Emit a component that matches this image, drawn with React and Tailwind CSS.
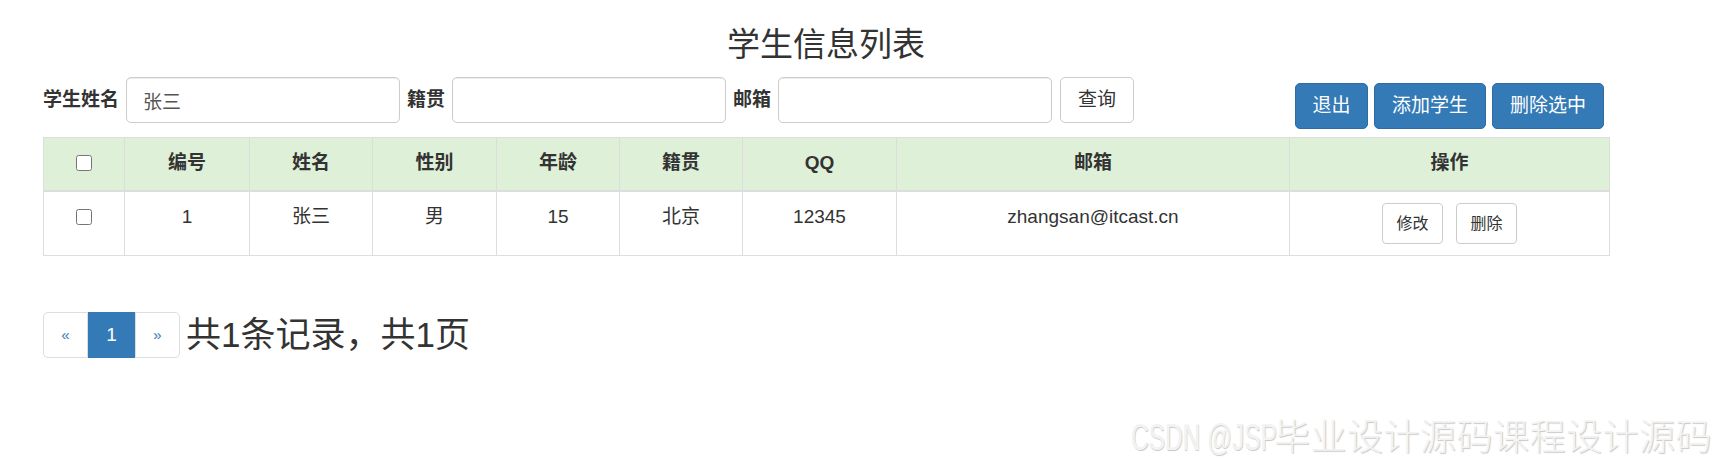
const font = { fontFamily: '"Liberation Sans", Arial, "Noto Sans CJK SC", sans-serif' };

const columns = [
  { key: "check", label: "", w: "w-[81px]" },
  { key: "id", label: "编号", w: "w-[125px]" },
  { key: "name", label: "姓名", w: "w-[123px]" },
  { key: "gender", label: "性别", w: "w-[124px]" },
  { key: "age", label: "年龄", w: "w-[123px]" },
  { key: "address", label: "籍贯", w: "w-[123px]" },
  { key: "qq", label: "QQ", w: "w-[154px]" },
  { key: "email", label: "邮箱", w: "w-[393px]" },
  { key: "ops", label: "操作", w: "w-[320px]" },
];

const students = [
  {
    id: 1,
    name: "张三",
    gender: "男",
    age: 15,
    address: "北京",
    qq: "12345",
    email: "zhangsan@itcast.cn",
  },
];

const Checkbox = () => (
  <input
    type="checkbox"
    className="w-[16px] h-[16px] mt-[6px] accent-[#337ab7]"
  />
);

const App = () => {
  return (
    <div
      className="relative w-[1719px] h-[469px] bg-white text-[#333] text-[19px] overflow-hidden"
      style={font}
    >
      <div className="pl-[43px] w-[1609px]">
        <h3 className="mt-[27px] mb-[14px] text-center text-[33px] leading-[36px] font-normal">
          学生信息列表
        </h3>

        <div className="flex justify-between items-start">
          <form className="flex items-center">
            <label className="font-bold mr-[7px]">学生姓名</label>
            <input
              defaultValue="张三"
              className="w-[274px] h-[46px] px-[16px] border border-[#ccc] rounded-[5px] text-[#555] shadow-[inset_0_1px_1px_rgba(0,0,0,0.075)] outline-none"
            />
            <label className="font-bold ml-[7px] mr-[7px]">籍贯</label>
            <input className="w-[274px] h-[46px] px-[16px] border border-[#ccc] rounded-[5px] text-[#555] shadow-[inset_0_1px_1px_rgba(0,0,0,0.075)] outline-none" />
            <label className="font-bold ml-[7px] mr-[7px]">邮箱</label>
            <input className="w-[274px] h-[46px] px-[16px] border border-[#ccc] rounded-[5px] text-[#555] shadow-[inset_0_1px_1px_rgba(0,0,0,0.075)] outline-none" />
            <button
              type="button"
              className="ml-[8px] w-[74px] h-[46px] border border-[#ccc] rounded-[5px] bg-white text-[#333]"
            >
              查询
            </button>
          </form>

          <div className="flex gap-[6px] mt-[6px] mr-[5px]">
            <button className="w-[73px] h-[46px] rounded-[5px] bg-[#337ab7] border border-[#2e6da4] text-white">
              退出
            </button>
            <button className="w-[112px] h-[46px] rounded-[5px] bg-[#337ab7] border border-[#2e6da4] text-white">
              添加学生
            </button>
            <button className="w-[112px] h-[46px] rounded-[5px] bg-[#337ab7] border border-[#2e6da4] text-white">
              删除选中
            </button>
          </div>
        </div>

        <table className="mt-[8px] w-[1566px] table-fixed border-collapse border border-[#ddd]">
          <thead>
            <tr className="bg-[#dff0d8]">
              {columns.map((col) => (
                <th
                  key={col.key}
                  className={`${col.w} border border-[#ddd] border-b-2 p-[11px] leading-[28px] font-bold text-center align-top`}
                >
                  {col.key === "check" ? <Checkbox /> : col.label}
                </th>
              ))}
            </tr>
          </thead>
          <tbody>
            {students.map((s) => (
              <tr key={s.id}>
                <td className="border border-[#ddd] p-[11px] leading-[28px] text-center align-top">
                  <Checkbox />
                </td>
                <td className="border border-[#ddd] p-[11px] leading-[28px] text-center align-top">
                  {s.id}
                </td>
                <td className="border border-[#ddd] p-[11px] leading-[28px] text-center align-top">
                  {s.name}
                </td>
                <td className="border border-[#ddd] p-[11px] leading-[28px] text-center align-top">
                  {s.gender}
                </td>
                <td className="border border-[#ddd] p-[11px] leading-[28px] text-center align-top">
                  {s.age}
                </td>
                <td className="border border-[#ddd] p-[11px] leading-[28px] text-center align-top">
                  {s.address}
                </td>
                <td className="border border-[#ddd] p-[11px] leading-[28px] text-center align-top">
                  {s.qq}
                </td>
                <td className="border border-[#ddd] p-[11px] leading-[28px] text-center align-top">
                  {s.email}
                </td>
                <td className="border border-[#ddd] p-[11px] text-center align-top">
                  <div className="flex justify-center gap-[13px]">
                    <button className="w-[61px] h-[41px] border border-[#ccc] rounded-[4px] bg-white text-[16px] text-[#333]">
                      修改
                    </button>
                    <button className="w-[61px] h-[41px] border border-[#ccc] rounded-[4px] bg-white text-[16px] text-[#333]">
                      删除
                    </button>
                  </div>
                </td>
              </tr>
            ))}
          </tbody>
        </table>

        <div className="flex items-center mt-[56px]">
          <ul className="flex">
            <li className="w-[45px] h-[46px] flex items-center justify-center border border-[#ddd] rounded-l-[5px] text-[#337ab7] text-[15px]">
              «
            </li>
            <li className="w-[47px] h-[46px] flex items-center justify-center bg-[#337ab7] border border-[#337ab7] text-white">
              1
            </li>
            <li className="w-[45px] h-[46px] flex items-center justify-center border border-[#ddd] rounded-r-[5px] text-[#337ab7] text-[15px]">
              »
            </li>
          </ul>
          <span className="ml-[6px] text-[35px] leading-[38px]">
            共1条记录，共1页
          </span>
        </div>
      </div>

      {/* watermark */}
      <div className="absolute left-[1131px] top-[418px] flex items-center h-[40px] whitespace-nowrap font-light text-[#f3f3f3] [text-shadow:1px_1px_1px_rgba(0,0,0,0.22)]">
        <span className="w-[143px] text-[36px] leading-[40px]">
          <span className="inline-block origin-left scale-x-[0.68]">CSDN @JSP</span>
        </span>
        <span className="text-[36px] leading-[40px] tracking-[0.5px]">
          毕业设计源码课程设计源码
        </span>
      </div>
    </div>
  );
};

export default App;
